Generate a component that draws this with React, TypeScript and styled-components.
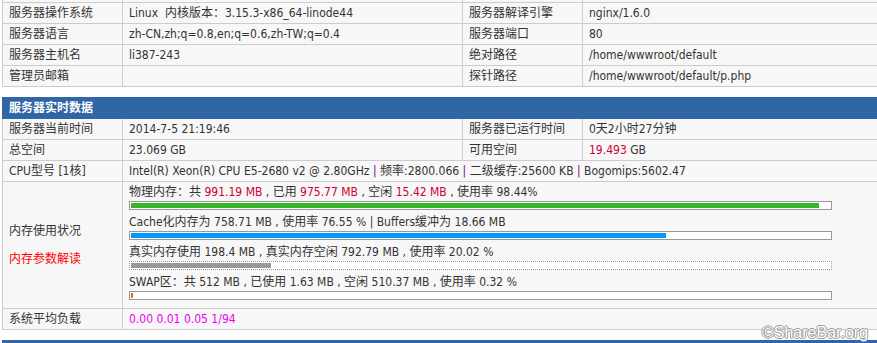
import styled, { createGlobalStyle } from 'styled-components';

const GlobalStyle = createGlobalStyle`
  body {
    margin: 0;
    overflow: hidden;
    background: #fff;
    color: #333;
    font-family: "DejaVu Sans Condensed", "Liberation Sans", "Noto Sans CJK SC", sans-serif;
    font-stretch: condensed;
    font-size: 12px;
  }
`;

const Page = styled.div`
  position: relative;
  display: flow-root;
  padding-left: 2px;
  width: 926px;
`;

const Table = styled.table<{ $first?: boolean }>`
  width: 924px;
  table-layout: fixed;
  border-collapse: collapse;
  border: 1px solid #ccc;
  margin: ${({ $first }) => ($first ? '-19px 0 10px 0' : '0 0 10px 0')};
`;

const Col = styled.col<{ $w: number }>`
  width: ${({ $w }) => $w}px;
`;

const HeadCell = styled.th`
  background: #3066a6;
  border: 1px solid #3066a6;
  color: #fff;
  font-weight: bold;
  text-align: left;
  padding: 3px 6px;
  line-height: 14px;
`;

const Cell = styled.td`
  background: #f7f7f7;
  border: 1px solid #ccc;
  padding: 3px 6px;
  line-height: 14px;
  vertical-align: middle;
  white-space: nowrap;
  overflow: hidden;
`;

const Red = styled.span`
  color: #cc0033;
`;

const Alert = styled.span`
  color: #ff0000;
`;

const Pipe = styled.span`
  color: #800080;
`;

const Load = styled.span`
  color: #ee00ee;
`;

const MemLine = styled.div`
  line-height: 14px;
`;

const Bar = styled.div<{ $dotted?: boolean }>`
  box-sizing: border-box;
  width: 703px;
  height: 9px;
  padding: 1px;
  margin: 2px 0 5px 0;
  background: #fff;
  border: 1px ${({ $dotted }) => ($dotted ? 'dotted' : 'solid')} #999;
  overflow: hidden;
`;

const Fill = styled.div<{ $color: string }>`
  height: 5px;
  background: ${({ $color }) => $color};
`;

const Watermark = styled.div`
  position: absolute;
  left: 762px;
  top: 324px;
  font-family: "Liberation Sans", sans-serif;
  font-stretch: normal;
  font-size: 16px;
  line-height: 18px;
  color: #fff;
  text-shadow: -1px 0 #999, 1px 0 #999, 0 -1px #999, 0 1px #999;
`;

const Cols = () => (
  <colgroup>
    <Col $w={120} />
    <Col $w={340} />
    <Col $w={120} />
    <Col $w={344} />
  </colgroup>
);

const basic: [string, React.ReactNode, string, React.ReactNode][] = [
  ['服务器域名/IP地址', 'sharebar.org', '服务器标识', 'Linux'],
  ['服务器操作系统', 'Linux\u00a0\u00a0内核版本：3.15.3-x86_64-linode44', '服务器解译引擎', 'nginx/1.6.0'],
  ['服务器语言', 'zh-CN,zh;q=0.8,en;q=0.6,zh-TW;q=0.4', '服务器端口', '80'],
  ['服务器主机名', 'li387-243', '绝对路径', '/home/wwwroot/default'],
  ['管理员邮箱', '', '探针路径', '/home/wwwroot/default/p.php'],
];

const bars = [
  {
    text: (
      <>
        物理内存：共 <Red>991.19 MB</Red> , 已用 <Red>975.77 MB</Red> , 空闲 <Red>15.42 MB</Red> , 使用率 98.44%
      </>
    ),
    pct: 98.44,
    color: '#36b52a',
  },
  {
    text: <>Cache化内存为 758.71 MB , 使用率 76.55 % | Buffers缓冲为 18.66 MB</>,
    pct: 76.55,
    color: '#0099ff',
  },
  {
    text: <>真实内存使用 198.4 MB , 真实内存空闲 792.79 MB , 使用率 20.02 %</>,
    pct: 20.02,
    color: '#999999',
    dotted: true,
  },
  {
    text: <>SWAP区：共 512 MB , 已使用 1.63 MB , 空闲 510.37 MB , 使用率 0.32 %</>,
    pct: 0.32,
    color: '#ff6600',
  },
];

export default function App() {
  return (
    <Page>
      <GlobalStyle />
      <Table $first>
        <Cols />
        <tbody>
          {basic.map(([a, b, c, d]) => (
            <tr key={a}>
              <Cell>{a}</Cell>
              <Cell>{b}</Cell>
              <Cell>{c}</Cell>
              <Cell>{d}</Cell>
            </tr>
          ))}
        </tbody>
      </Table>

      <Table>
        <Cols />
        <tbody>
          <tr>
            <HeadCell colSpan={4}>服务器实时数据</HeadCell>
          </tr>
          <tr>
            <Cell>服务器当前时间</Cell>
            <Cell>2014-7-5 21:19:46</Cell>
            <Cell>服务器已运行时间</Cell>
            <Cell>0天2小时27分钟</Cell>
          </tr>
          <tr>
            <Cell>总空间</Cell>
            <Cell>23.069 GB</Cell>
            <Cell>可用空间</Cell>
            <Cell>
              <Red>19.493</Red> GB
            </Cell>
          </tr>
          <tr>
            <Cell>CPU型号 [1核]</Cell>
            <Cell colSpan={3}>
              Intel(R) Xeon(R) CPU E5-2680 v2 @ 2.80GHz <Pipe>|</Pipe> 频率:2800.066 <Pipe>|</Pipe> 二级缓存:25600 KB{' '}
              <Pipe>|</Pipe> Bogomips:5602.47
            </Cell>
          </tr>
          <tr>
            <Cell>
              内存使用状况
              <br />
              <br />
              <Alert>内存参数解读</Alert>
            </Cell>
            <Cell colSpan={3}>
              {bars.map((b, i) => (
                <div key={i}>
                  <MemLine>{b.text}</MemLine>
                  <Bar $dotted={b.dotted}>
                    <Fill $color={b.color} style={{ width: `${Math.max(b.pct, 0.3)}%` }} />
                  </Bar>
                </div>
              ))}
            </Cell>
          </tr>
          <tr>
            <Cell>系统平均负载</Cell>
            <Cell colSpan={3}>
              <Load>0.00 0.01 0.05 1/94</Load>
            </Cell>
          </tr>
        </tbody>
      </Table>

      <Table>
        <Cols />
        <tbody>
          <tr>
            <HeadCell colSpan={4}>网络使用状况</HeadCell>
          </tr>
        </tbody>
      </Table>

      <Watermark>©ShareBar.org</Watermark>
    </Page>
  );
}
